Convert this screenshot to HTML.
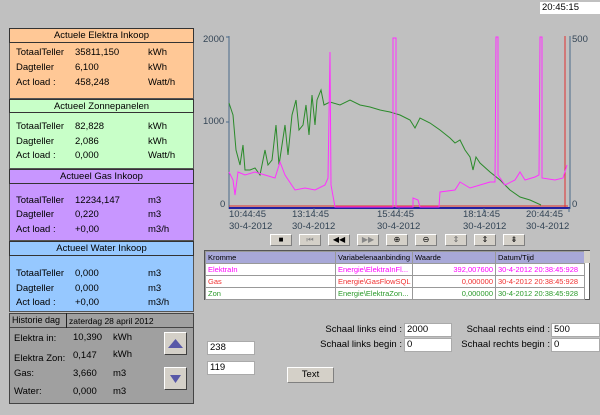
<!DOCTYPE html>
<html><head><meta charset="utf-8"><style>
*{margin:0;padding:0;box-sizing:border-box}
body{width:600px;height:415px;background:#c0c0c0;font-family:"Liberation Sans",sans-serif;font-size:9.5px;color:#000;position:relative;overflow:hidden}
.a{position:absolute;white-space:nowrap}
.box{position:absolute;border:1px solid #555}
.hd{position:absolute;left:9px;width:185px;text-align:center;border:1px solid #333;font-size:9.5px;line-height:13px}
.inp{position:absolute;background:#fff;border:1px solid #aaa;font-size:9.5px;line-height:12px;padding-left:2px}
.btn{position:absolute;width:22px;height:12px;background:#d4d0c8;border:1px solid;border-color:#fff #808080 #808080 #fff;font-size:8px;text-align:center;line-height:10px}
table{border-collapse:collapse;font-size:7.5px}
td{border:1px solid #999;height:12px;padding:0 2px;white-space:nowrap;overflow:hidden}
.ax{color:#345;font-size:9.5px}
.r{position:absolute;white-space:nowrap;text-align:right}
</style></head><body>
<div class="inp" style="left:540px;top:2px;width:60px;height:12px;border:none">20:45:15</div>

<div class="box" style="left:9px;top:28px;width:185px;height:71px;background:#ffc896"></div>
<div class="hd" style="top:28px;height:15px;background:#ffc896">Actuele Elektra Inkoop</div>
<div class="a" style="left:16px;top:47px">TotaalTeller</div><div class="a" style="left:75px;top:47px">35811,150</div><div class="a" style="left:148px;top:47px">kWh</div>
<div class="a" style="left:16px;top:62px">Dagteller</div><div class="a" style="left:75px;top:62px">6,100</div><div class="a" style="left:148px;top:62px">kWh</div>
<div class="a" style="left:16px;top:77px">Act load :</div><div class="a" style="left:75px;top:77px">458,248</div><div class="a" style="left:148px;top:77px">Watt/h</div>

<div class="box" style="left:9px;top:99px;width:185px;height:70px;background:#c8ffc8"></div>
<div class="hd" style="top:99px;height:14px;background:#c8ffc8">Actueel Zonnepanelen</div>
<div class="a" style="left:16px;top:121px">TotaalTeller</div><div class="a" style="left:75px;top:121px">82,828</div><div class="a" style="left:148px;top:121px">kWh</div>
<div class="a" style="left:16px;top:136px">Dagteller</div><div class="a" style="left:75px;top:136px">2,086</div><div class="a" style="left:148px;top:136px">kWh</div>
<div class="a" style="left:16px;top:150px">Act load :</div><div class="a" style="left:75px;top:150px">0,000</div><div class="a" style="left:148px;top:150px">Watt/h</div>

<div class="box" style="left:9px;top:169px;width:185px;height:72px;background:#c896ff"></div>
<div class="hd" style="top:169px;height:15px;background:#c896ff">Actueel Gas Inkoop</div>
<div class="a" style="left:16px;top:195px">TotaalTeller</div><div class="a" style="left:75px;top:195px">12234,147</div><div class="a" style="left:148px;top:195px">m3</div>
<div class="a" style="left:16px;top:209px">Dagteller</div><div class="a" style="left:75px;top:209px">0,220</div><div class="a" style="left:148px;top:209px">m3</div>
<div class="a" style="left:16px;top:224px">Act load :</div><div class="a" style="left:75px;top:224px">+0,00</div><div class="a" style="left:148px;top:224px">m3/h</div>

<div class="box" style="left:9px;top:241px;width:185px;height:71px;background:#96c8ff"></div>
<div class="hd" style="top:241px;height:15px;background:#96c8ff">Actueel Water Inkoop</div>
<div class="a" style="left:16px;top:268px">TotaalTeller</div><div class="a" style="left:75px;top:268px">0,000</div><div class="a" style="left:148px;top:268px">m3</div>
<div class="a" style="left:16px;top:283px">Dagteller</div><div class="a" style="left:75px;top:283px">0,000</div><div class="a" style="left:148px;top:283px">m3</div>
<div class="a" style="left:16px;top:297px">Act load :</div><div class="a" style="left:75px;top:297px">+0,00</div><div class="a" style="left:148px;top:297px">m3/h</div>

<div class="box" style="left:9px;top:313px;width:185px;height:91px;background:#a0a0a0;border-color:#444"></div>
<div class="box" style="left:9px;top:313px;width:185px;height:15px;background:#a0a0a0;border-color:#444"></div>
<div class="box" style="left:66px;top:313px;width:1px;height:15px;border:none;background:#222"></div>
<div class="a" style="left:12px;top:315px;font-size:9px">Historie dag</div>
<div class="a" style="left:69px;top:316px;font-size:8.5px">zaterdag 28 april 2012</div>
<div class="a" style="left:14px;top:333px">Elektra in:</div><div class="a" style="left:73px;top:332px">10,390</div><div class="a" style="left:113px;top:332px">kWh</div>
<div class="a" style="left:14px;top:353px">Elektra Zon:</div><div class="a" style="left:73px;top:350px">0,147</div><div class="a" style="left:113px;top:349px">kWh</div>
<div class="a" style="left:14px;top:368px">Gas:</div><div class="a" style="left:73px;top:368px">3,660</div><div class="a" style="left:113px;top:368px">m3</div>
<div class="a" style="left:14px;top:386px">Water:</div><div class="a" style="left:73px;top:386px">0,000</div><div class="a" style="left:113px;top:386px">m3</div>
<div class="a" style="left:164px;top:332px;width:23px;height:23px;background:#d4d0c8;border:1px solid;border-color:#fff #404040 #404040 #fff"><svg width="21" height="21"><polygon points="3,15 18,15 10.5,6" fill="#5858a8"/></svg></div>
<div class="a" style="left:164px;top:367px;width:23px;height:23px;background:#d4d0c8;border:1px solid;border-color:#fff #404040 #404040 #fff"><svg width="21" height="21"><polygon points="5,7 16,7 10.5,15" fill="#5858a8"/></svg></div>

<div class="a ax" style="left:203px;top:34px">2000</div>
<div class="a ax" style="left:203px;top:116px">1000</div>
<div class="a ax" style="left:220px;top:199px">0</div>
<div class="a ax" style="left:572px;top:34px">500</div>
<div class="a ax" style="left:572px;top:199px">0</div>
<svg class="a" style="left:0;top:0" width="600" height="240">
<line x1="229" y1="36" x2="229" y2="209" stroke="#4a6a8a"/>
<line x1="570" y1="36" x2="570" y2="209" stroke="#4a6a8a"/>
<line x1="226" y1="37" x2="229" y2="37" stroke="#4a6a8a"/><line x1="226" y1="122" x2="229" y2="122" stroke="#4a6a8a"/>
<line x1="229" y1="208" x2="570" y2="208" stroke="#2020a0" stroke-width="2"/>
<line x1="229" y1="206" x2="568" y2="206" stroke="#e03030"/>
<line x1="565" y1="36" x2="565" y2="207" stroke="#e03030"/>
<g stroke="#4a6a8a"><line x1="314" y1="208" x2="314" y2="212"/><line x1="399" y1="208" x2="399" y2="212"/><line x1="484" y1="208" x2="484" y2="212"/><line x1="569" y1="208" x2="569" y2="212"/></g>
<polyline fill="none" stroke="#2a8a2a" points="229,103 233,115 236,150 240,165 243,145 245,170 250,170 255,168 260,175 265,150 268,165 272,160 276,125 279,165 282,145 285,125 288,155 292,115 296,100 299,130 303,125 306,105 309,135 312,95 315,125 317,100 321,90 324,105 330,102 340,105 350,100 360,105 370,107 380,110 390,112 400,115 410,120 415,128 420,118 430,123 440,130 450,138 455,143 460,140 465,150 470,157 473,170 476,157 480,163 490,172 500,180 510,190 520,197 530,200 541,205"/>
<polyline fill="none" stroke="#ff30ff" points="229,172 233,180 235,195 238,172 245,175 255,172 265,175 275,178 280,162 285,175 295,190 305,188 315,190 325,185 328,178 330,52 331,185 335,207 393,207 393,38 396,38 396,207 413,207 413,198 418,200 420,207 439,207 440,192 455,190 460,182 470,188 480,185 490,182 495,182 496,37 498,37 498,175 505,185 515,180 520,172 525,180 535,177 539,175 540,37 542,37 542,178 555,180 563,178 567,165"/>
</svg>
<div class="a ax" style="left:229px;top:209px;line-height:12px">10:44:45<br>30-4-2012</div>
<div class="a ax" style="left:292px;top:209px;line-height:12px">13:14:45<br>30-4-2012</div>
<div class="a ax" style="left:377px;top:209px;line-height:12px">15:44:45<br>30-4-2012</div>
<div class="a ax" style="left:463px;top:209px;line-height:12px">18:14:45<br>30-4-2012</div>
<div class="a ax" style="left:526px;top:209px;line-height:12px">20:44:45<br>30-4-2012</div>
<div class="btn" style="left:270px;top:234px">■</div>
<div class="btn" style="left:299px;top:234px;color:#888">⏮</div>
<div class="btn" style="left:328px;top:234px">◀◀</div>
<div class="btn" style="left:357px;top:234px;color:#888">▶▶</div>
<div class="btn" style="left:386px;top:234px">⊕</div>
<div class="btn" style="left:415px;top:234px">⊖</div>
<div class="btn" style="left:445px;top:234px;color:#666">⇕</div>
<div class="btn" style="left:474px;top:234px">⇕</div>
<div class="btn" style="left:503px;top:234px">⇟</div>

<div class="a" style="left:204px;top:250px;width:386px;height:50px;background:#fff;border:1px solid #555">
<table style="width:379px;table-layout:fixed">
<tr style="background:#a8a8d8"><td style="width:130px">Kromme</td><td style="width:77px">Variabelenaanbinding</td><td style="width:83px">Waarde</td><td style="width:89px">Datum/Tijd</td></tr>
<tr style="color:#f0f"><td>ElektraIn</td><td>Energie\ElektraInFl...</td><td style="text-align:right">392,007600</td><td>30-4-2012 20:38:45:928</td></tr>
<tr style="color:#f03030"><td>Gas</td><td>Energie\GasFlowSQL</td><td style="text-align:right">0,000000</td><td>30-4-2012 20:38:45:928</td></tr>
<tr style="color:#2a9a2a"><td>Zon</td><td>Energie\ElektraZon...</td><td style="text-align:right">0,000000</td><td>30-4-2012 20:38:45:928</td></tr>
</table>
<div class="a" style="left:379px;top:0;width:6px;height:12px;background:#d4d0c8"></div>
</div>

<div class="r" style="right:198px;top:324px">Schaal links eind :</div>
<div class="r" style="right:198px;top:339px">Schaal links begin :</div>
<div class="inp" style="left:404px;top:323px;width:48px;height:14px">2000</div>
<div class="inp" style="left:404px;top:338px;width:48px;height:14px">0</div>
<div class="r" style="right:50px;top:324px">Schaal rechts eind :</div>
<div class="r" style="right:50px;top:339px">Schaal rechts begin :</div>
<div class="inp" style="left:551px;top:323px;width:49px;height:14px">500</div>
<div class="inp" style="left:551px;top:338px;width:49px;height:14px">0</div>
<div class="inp" style="left:207px;top:341px;width:48px;height:14px">238</div>
<div class="inp" style="left:207px;top:361px;width:48px;height:14px">119</div>
<div class="a" style="left:287px;top:367px;width:47px;height:16px;background:#d4d0c8;border:1px solid;border-color:#fff #808080 #808080 #fff;text-align:center;line-height:14px">Text</div>
</body></html>
